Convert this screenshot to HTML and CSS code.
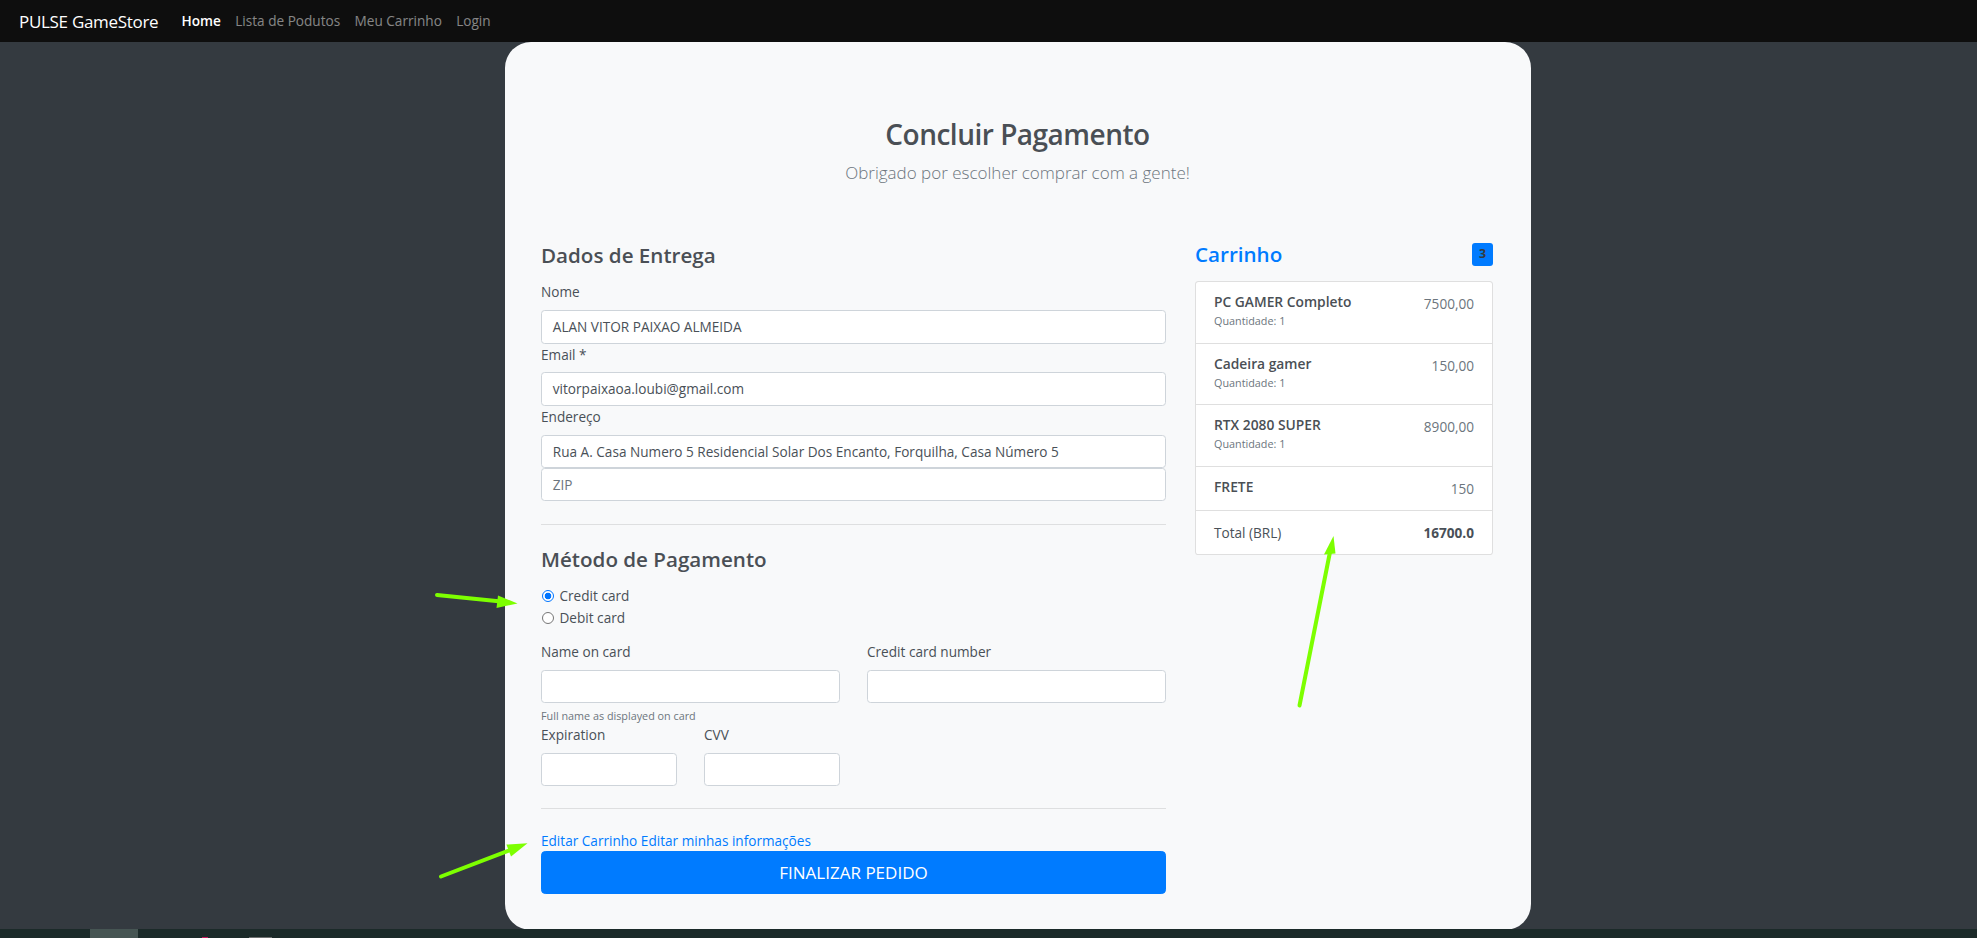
FILE: index.html
```html
<!DOCTYPE html>
<html lang="pt-BR">
<head>
<meta charset="utf-8">
<title>PULSE GameStore - Concluir Pagamento</title>
<link rel="stylesheet" href="styles.css">
</head>
<body>
<nav class="navbar">
  <a class="brand" href="#">PULSE GameStore</a>
  <ul class="nav-links">
    <li><a class="nav-link active" href="#">Home</a></li>
    <li><a class="nav-link" href="#">Lista de Podutos</a></li>
    <li><a class="nav-link" href="#">Meu Carrinho</a></li>
    <li><a class="nav-link" href="#">Login</a></li>
  </ul>
</nav>

<main class="card">
  <header class="page-head">
    <h2 class="title">Concluir Pagamento</h2>
    <p class="lead">Obrigado por escolher comprar com a gente!</p>
  </header>

  <div class="cols">
    <section class="form-col">
      <h4 class="section-title">Dados de Entrega</h4>
      <label class="lbl">Nome</label>
      <div class="input">ALAN VITOR PAIXAO ALMEIDA</div>
      <label class="lbl">Email *</label>
      <div class="input">vitorpaixaoa.loubi@gmail.com</div>
      <label class="lbl">Endereço</label>
      <div class="input">Rua A. Casa Numero 5 Residencial Solar Dos Encanto, Forquilha, Casa Número 5</div>
      <div class="input placeholder">ZIP</div>

      <hr class="sep sep-1">

      <h4 class="section-title">Método de Pagamento</h4>
      <div class="radios">
        <label class="radio"><span class="radio-dot checked"></span>Credit card</label>
        <label class="radio"><span class="radio-dot"></span>Debit card</label>
      </div>

      <div class="row-2">
        <div class="field">
          <label class="lbl">Name on card</label>
          <div class="input"></div>
          <small class="hint">Full name as displayed on card</small>
        </div>
        <div class="field">
          <label class="lbl">Credit card number</label>
          <div class="input"></div>
        </div>
      </div>
      <div class="row-4">
        <div class="field">
          <label class="lbl">Expiration</label>
          <div class="input"></div>
        </div>
        <div class="field">
          <label class="lbl">CVV</label>
          <div class="input"></div>
        </div>
      </div>

      <hr class="sep sep-2">

      <div class="links"><a href="#">Editar Carrinho</a> <a href="#">Editar minhas informações</a></div>
      <button class="btn-primary" type="button">FINALIZAR PEDIDO</button>
    </section>

    <aside class="cart-col">
      <div class="cart-head">
        <h4 class="cart-title">Carrinho</h4>
        <span class="badge">3</span>
      </div>
      <ul class="list">
        <li class="item item-tall">
          <div><h6 class="item-name">PC GAMER Completo</h6><div class="qty">Quantidade: 1</div></div>
          <span class="price">7500,00</span>
        </li>
        <li class="item item-tall">
          <div><h6 class="item-name">Cadeira gamer</h6><div class="qty">Quantidade: 1</div></div>
          <span class="price">150,00</span>
        </li>
        <li class="item item-tall">
          <div><h6 class="item-name">RTX 2080 SUPER</h6><div class="qty">Quantidade: 1</div></div>
          <span class="price">8900,00</span>
        </li>
        <li class="item">
          <h6 class="item-name">FRETE</h6>
          <span class="price">150</span>
        </li>
        <li class="item">
          <span class="total-label">Total (BRL)</span>
          <strong class="total">16700.0</strong>
        </li>
      </ul>
    </aside>
  </div>
</main>

<div class="taskbar">
  <span class="tb-item tb-active"></span>
  <span class="tb-item tb-pink"></span>
  <span class="tb-item tb-grey"></span>
</div>

<svg class="annotations" width="1977" height="938" viewBox="0 0 1977 938" aria-hidden="true">
  <g fill="#7dff00" stroke="#7dff00" stroke-linecap="round">
    <line x1="437" y1="595" x2="501" y2="601.5" stroke-width="4"/>
    <polygon points="498,595.5 496.5,608 517.5,603.5" stroke="none"/>
    <line x1="441" y1="876.5" x2="510" y2="850" stroke-width="4"/>
    <polygon points="506.4,844.6 511,856.4 527.5,843.3" stroke="none"/>
    <line x1="1299.5" y1="705.5" x2="1330" y2="552" stroke-width="4"/>
    <polygon points="1324,554.5 1335.5,553.5 1333.5,536" stroke="none"/>
  </g>
</svg>
</body>
</html>
```

FILE: styles.css
```css
* { box-sizing: border-box; }

html, body {
  margin: 0;
  padding: 0;
  height: 938px;
  overflow: hidden;
}

body {
  background: #343a40;
  font-family: "Open Sans", "Noto Sans", "Liberation Sans", sans-serif;
  font-size: 13.6px;
  line-height: 21.6px;
  color: #495057;
  position: relative;
}

a { text-decoration: none; }

/* NAVBAR */
.navbar {
  height: 42px;
  background: #0e0e0e;
  display: flex;
  align-items: center;
  padding-left: 19px;
}
.brand {
  color: #fff;
  font-size: 17px;
  line-height: 27px;
  letter-spacing: -0.3px;
  margin-right: 16px;
}
.nav-links {
  list-style: none;
  display: flex;
  margin: 0;
  padding: 0;
}
.nav-link {
  display: block;
  padding: 0 7.2px;
  color: rgba(255,255,255,.5);
  font-size: 13.6px;
}
.nav-link.active { color: #fff; font-weight: 600; }

/* CARD */
.card {
  display: block;
  margin-left: 505px;
  width: 1026px;
  height: 888px;
  background: #f8f9fa;
  border-radius: 26px;
  padding: 75px 37px 0 36px;
}

.page-head { text-align: center; }
.title {
  margin: 0 0 7px;
  font-size: 28px;
  line-height: 35px;
  font-weight: 600;
  letter-spacing: -0.5px;
  color: #4a4f55;
}
.lead {
  margin: 0;
  font-size: 17px;
  line-height: 27px;
  font-weight: 300;
  color: #6c757d;
}

.cols {
  display: grid;
  grid-template-columns: 625px 298px;
  column-gap: 29px;
  margin-top: 55px;
}

.section-title {
  margin: 0 0 13.4px;
  padding-top: 1px;
  font-size: 20.6px;
  line-height: 26px;
  font-weight: 600;
  color: #4a4f55;
}

.lbl {
  display: block;
  margin-bottom: 7.2px;
  color: #495057;
}

.input {
  height: 33.4px;
  background: #fff;
  border: 1px solid #ced4da;
  border-radius: 3.6px;
  padding: 5px 10.8px;
  color: #495057;
  white-space: nowrap;
  overflow: hidden;
}
.input.placeholder { color: #6c757d; }

.sep {
  border: 0;
  border-top: 1px solid rgba(0,0,0,.1);
  margin: 0;
}
.sep-1 { margin: 22.5px 0 20px; }
.sep-2 { margin: 21.5px 0 21px; }

.radios { margin-bottom: 12.5px; }
.radio {
  display: flex;
  align-items: center;
  height: 21.6px;
}
.radio-dot {
  width: 12px;
  height: 12px;
  border-radius: 50%;
  border: 1px solid #767676;
  background: #fff;
  margin: 0 6px 0 0.5px;
  flex: none;
}
.radio-dot.checked {
  border: 1px solid #0075ff;
  background: radial-gradient(circle, #0075ff 0 3.2px, #fff 3.6px);
}

.row-2 {
  display: grid;
  grid-template-columns: 299px 299px;
  column-gap: 27px;
}
.row-4 {
  display: grid;
  grid-template-columns: 136px 136px;
  column-gap: 27px;
}
.hint {
  display: block;
  font-size: 10.8px;
  line-height: 17.3px;
  margin-top: 3.6px;
  color: #6c757d;
}

.links a { color: #007bff; }

.btn-primary {
  display: block;
  width: 100%;
  height: 43px;
  background: #007bff;
  border: 1px solid #007bff;
  border-radius: 4.3px;
  color: #fff;
  font-family: inherit;
  font-size: 17px;
  line-height: 27px;
  padding: 0;
}

/* CART */
.cart-head {
  display: flex;
  justify-content: space-between;
  align-items: center;
  margin-bottom: 14.4px;
}
.cart-title {
  margin: 0;
  padding-top: 1px;
  height: 26px;
  font-size: 20.6px;
  line-height: 25px;
  font-weight: 600;
  color: #007bff;
}
.badge {
  width: 21px;
  height: 23px;
  border-radius: 3px;
  background: #007bff;
  color: #343a40;
  font-weight: 700;
  font-size: 12.5px;
  display: flex;
  align-items: center;
  justify-content: center;
}

.list {
  list-style: none;
  margin: 0;
  padding: 0;
  background: #fff;
  border: 1px solid rgba(0,0,0,.125);
  border-radius: 3.6px;
}
.item {
  display: flex;
  justify-content: space-between;
  padding: 10.8px 18px 10.8px 18px;
  border-top: 1px solid rgba(0,0,0,.125);
}
.item:first-child { border-top: 0; }
.item-name {
  margin: 0;
  font-size: 13.8px;
  line-height: 17.3px;
  font-weight: 600;
  color: #4a4f55;
}
.qty {
  font-size: 10.8px;
  padding-top: 1px;
  line-height: 20.6px;
  color: #6c757d;
}
.price { color: #6c757d; }
.total-label { color: #495057; }
.total { font-weight: 700; color: #495057; }

/* TASKBAR */
.taskbar {
  position: absolute;
  left: 0;
  right: 0;
  bottom: 0;
  height: 9px;
  background: #1b2a29;
}
.tb-item {
  position: absolute;
  top: 0;
  height: 9px;
}
.tb-active { left: 90px; width: 48px; background: #465553; }
.tb-pink { left: 202px; width: 6px; top: 8px; height: 1px; background: #c2185b; }
.tb-grey { left: 249px; width: 23px; top: 8px; height: 1px; background: #6d7070; }

.annotations {
  position: absolute;
  left: 0;
  top: 0;
  pointer-events: none;
}
```
